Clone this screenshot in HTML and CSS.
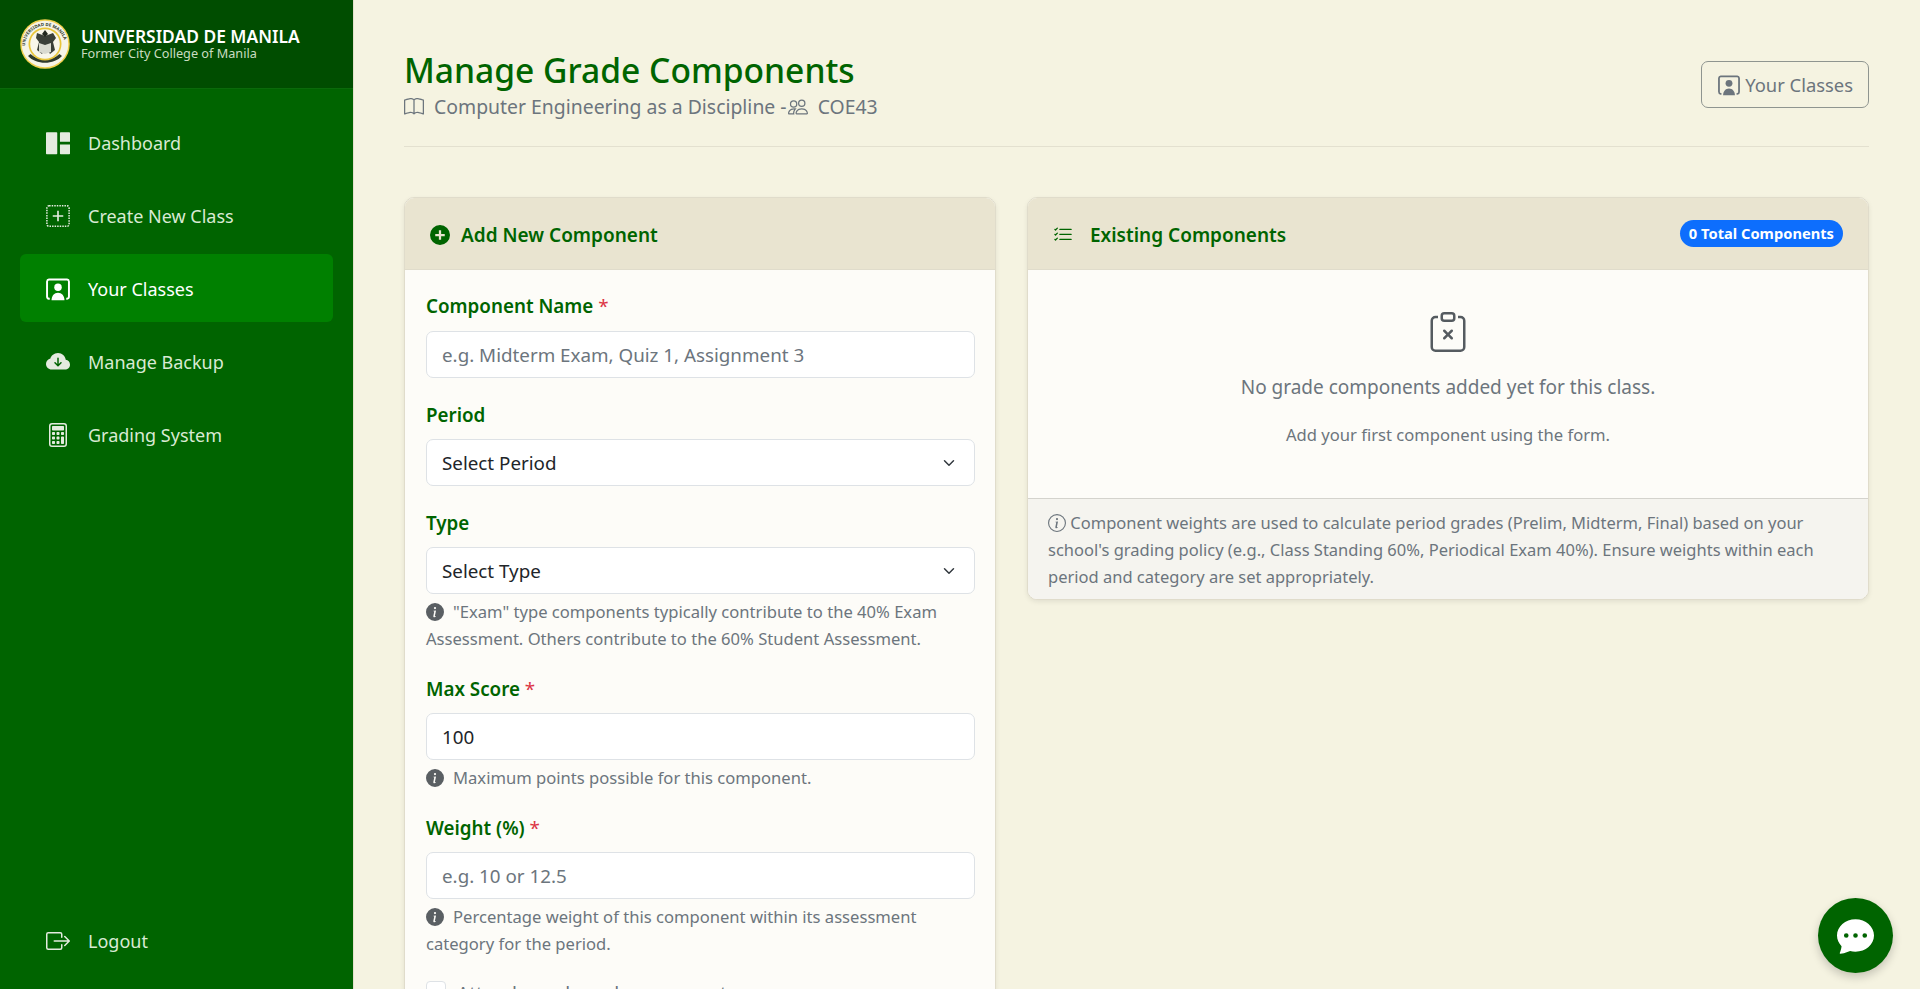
FILE: index.html

```html
<!DOCTYPE html>
<html lang="en">
  <head>
    <meta charset="UTF-8" />
    <meta name="viewport" content="width=device-width, initial-scale=1.0" />
    <title>Manage Grade Components</title>
    <link rel="stylesheet" href="styles.css">
  </head>
  <body>
    <aside class="sidebar">
      <div class="brand">
        <svg class="seal" viewBox="0 0 50 50">
          <circle cx="25" cy="25" r="24.800" fill="#f0cf4e"/>
          <circle cx="25" cy="25" r="23.300" fill="#f6f4e8"/>
          <path d="M8 37c8 9 26 9 34 0l-2.500-2c-7 7-22 7-29 0z" fill="#2f3a2c"/>
          <circle cx="25" cy="25" r="16.500" fill="#e8c53a"/>
          <circle cx="25" cy="25" r="14.800" fill="#f8f6ea"/>
          <path d="M17 14l8 3 8-3 3 5-3 4 2 8-5 4-3-5-2 0-3 5-5-4 2-8-3-4z" fill="#3a3f38"/>
          <path d="M19 24l6 2 6-2v9l-6 2-6-2z" fill="#d9dad0"/>
          <path d="M25 11l3 4-3 3-3-3z" fill="#22281f"/>
          <path id="seal-arc" d="M5 27a20 20 0 0 1 40 0" fill="none"/>
          <text class="seal-text"><textPath href="#seal-arc">UNIVERSIDAD DE MANILA</textPath></text>
        </svg>
        <div>
          <div class="brand-name">UNIVERSIDAD DE MANILA</div>
          <div class="brand-sub">Former City College of Manila</div>
        </div>
      </div>
      <nav class="nav">
        <a class="nav-item">
          <svg class="nav-icon" viewBox="0 0 16 16" fill="currentColor"><path d="M0 1.300a.5.5 0 0 1 .5-.5h6.500a.5.5 0 0 1 .5.5V15a.5.5 0 0 1-.5.5H.5A.5.5 0 0 1 0 15zM9.300 1.300a.5.5 0 0 1 .5-.5h5.700a.5.5 0 0 1 .5.5v5.900H9.300zM9.300 9H16v6a.5.5 0 0 1-.5.5H9.800a.5.5 0 0 1-.5-.5z"/></svg>
          Dashboard
        </a>
        <a class="nav-item">
          <svg class="nav-icon" viewBox="0 0 16 16" fill="none" stroke="currentColor"><rect x=".6" y="1.100" width="14.800" height="13.800" rx="1.500" stroke-dasharray="1 .7"/><path d="M8 4.500v7M4.500 8h7" stroke-width="1.100"/></svg>
          Create New Class
        </a>
        <a class="nav-item active">
          <svg class="nav-icon"><use href="#i-person-video"/></svg>
          Your Classes
        </a>
        <a class="nav-item">
          <svg class="nav-icon" viewBox="0 0 16 16" fill="currentColor"><path d="M8 2a5.530 5.530 0 0 0-3.594 1.342c-.766.66-1.321 1.520-1.464 2.383C1.266 6.095 0 7.555 0 9.318 0 11.366 1.708 13 3.781 13h8.906C14.502 13 16 11.570 16 9.773c0-1.636-1.242-2.969-2.834-3.194C12.923 3.999 10.690 2 8 2zm2.354 6.854-2 2a.5.5 0 0 1-.708 0l-2-2a.5.5 0 1 1 .708-.708L7.500 9.293V5.500a.5.5 0 0 1 1 0v3.793l1.146-1.147a.5.5 0 0 1 .708.708z"/></svg>
          Manage Backup
        </a>
        <a class="nav-item">
          <svg class="nav-icon" viewBox="0 0 16 16" fill="currentColor"><path d="M12 1a1 1 0 0 1 1 1v12a1 1 0 0 1-1 1H4a1 1 0 0 1-1-1V2a1 1 0 0 1 1-1h8zM4 0a2 2 0 0 0-2 2v12a2 2 0 0 0 2 2h8a2 2 0 0 0 2-2V2a2 2 0 0 0-2-2H4z"/><path d="M4 2.500a.5.5 0 0 1 .5-.5h7a.5.5 0 0 1 .5.5v2a.5.5 0 0 1-.5.5h-7a.5.5 0 0 1-.5-.5v-2zm0 4a.5.5 0 0 1 .5-.5h1a.5.5 0 0 1 .5.5v1a.5.5 0 0 1-.5.5h-1a.5.5 0 0 1-.5-.5v-1zm0 3a.5.5 0 0 1 .5-.5h1a.5.5 0 0 1 .5.5v1a.5.5 0 0 1-.5.5h-1a.5.5 0 0 1-.5-.5v-1zm0 3a.5.5 0 0 1 .5-.5h1a.5.5 0 0 1 .5.5v1a.5.5 0 0 1-.5.5h-1a.5.5 0 0 1-.5-.5v-1zm3-6a.5.5 0 0 1 .5-.5h1a.5.5 0 0 1 .5.5v1a.5.5 0 0 1-.5.5h-1a.5.5 0 0 1-.5-.5v-1zm0 3a.5.5 0 0 1 .5-.5h1a.5.5 0 0 1 .5.5v1a.5.5 0 0 1-.5.5h-1a.5.5 0 0 1-.5-.5v-1zm0 3a.5.5 0 0 1 .5-.5h1a.5.5 0 0 1 .5.5v1a.5.5 0 0 1-.5.5h-1a.5.5 0 0 1-.5-.5v-1zm3-6a.5.5 0 0 1 .5-.5h1a.5.5 0 0 1 .5.5v1a.5.5 0 0 1-.5.5h-1a.5.5 0 0 1-.5-.5v-1zm0 3a.5.5 0 0 1 .5-.5h1a.5.5 0 0 1 .5.5v4a.5.5 0 0 1-.5.5h-1a.5.5 0 0 1-.5-.5v-4z"/></svg>
          Grading System
        </a>
      </nav>
      <a class="nav-item logout">
        <svg class="nav-icon" viewBox="0 0 16 16" fill="currentColor"><path d="M10 12.500a.5.5 0 0 1-.5.5h-8a.5.5 0 0 1-.5-.5v-9a.5.5 0 0 1 .5-.5h8a.5.5 0 0 1 .5.5v2a.5.5 0 0 0 1 0v-2A1.500 1.500 0 0 0 9.500 2h-8A1.500 1.500 0 0 0 0 3.500v9A1.500 1.500 0 0 0 1.500 14h8a1.500 1.500 0 0 0 1.500-1.500v-2a.5.5 0 0 0-1 0v2z"/><path d="M15.854 8.354a.5.5 0 0 0 0-.708l-3-3a.5.5 0 0 0-.708.708L14.293 7.500H5.500a.5.5 0 0 0 0 1h8.793l-2.147 2.146a.5.5 0 0 0 .708.708l3-3z"/></svg>
        Logout
      </a>
    </aside>

    <main class="main">
      <header class="page-head">
        <div>
          <h1 class="page-title">Manage Grade Components</h1>
          <p class="page-sub">
            <svg class="sub-icon" viewBox="0 0 16 16" fill="currentColor"><path d="M1 2.828c.885-.37 2.154-.769 3.388-.893 1.330-.134 2.458.063 3.112.752v9.746c-.935-.53-2.120-.603-3.213-.493-1.180.12-2.370.461-3.287.811V2.828zm7.500-.141c.654-.689 1.782-.886 3.112-.752 1.234.124 2.503.523 3.388.893v9.923c-.918-.35-2.107-.692-3.287-.81-1.094-.111-2.278-.039-3.213.492V2.687zM8 1.783C7.015.936 5.587.81 4.287.94c-1.514.153-3.042.672-3.994 1.105A.5.5 0 0 0 0 2.500v11a.5.5 0 0 0 .707.455c.882-.4 2.303-.881 3.680-1.020 1.409-.142 2.590.087 3.223.877a.5.5 0 0 0 .78 0c.633-.79 1.814-1.019 3.222-.877 1.378.139 2.800.62 3.681 1.020A.5.5 0 0 0 16 13.500v-11a.5.5 0 0 0-.293-.455c-.952-.433-2.480-.952-3.994-1.105C10.413.809 8.985.936 8 1.783z"/></svg>
            Computer Engineering as a Discipline -
            <svg class="sub-icon people-icon" viewBox="0 0 16 16" fill="currentColor"><path d="M15 14s1 0 1-1-1-4-5-4-5 3-5 4 1 1 1 1h8zm-7.978-1A.261.261 0 0 1 7 12.996c.001-.264.167-1.030.76-1.720C8.312 10.629 9.282 10 11 10c1.717 0 2.687.63 3.240 1.276.593.69.758 1.457.76 1.720l-.008.002a.274.274 0 0 1-.014.002H7.022zM11 7a2 2 0 1 0 0-4 2 2 0 0 0 0 4zm3-2a3 3 0 1 1-6 0 3 3 0 0 1 6 0zM6.936 9.280a5.880 5.880 0 0 0-1.230-.247A7.350 7.350 0 0 0 5 9c-4 0-5 3-5 4 0 .667.333 1 1 1h4.216A2.238 2.238 0 0 1 5 13c0-1.010.377-2.042 1.090-2.904.243-.294.526-.569.846-.816zM4.920 10A5.493 5.493 0 0 0 4 13H1c0-.26.164-1.030.76-1.724.545-.636 1.492-1.256 3.160-1.275zM1.500 5.500a3 3 0 1 1 6 0 3 3 0 0 1-6 0zm3-2a2 2 0 1 0 0 4 2 2 0 0 0 0-4z"/></svg>
            COE43
          </p>
        </div>
        <a class="btn-back">
          <svg class="btn-icon"><use href="#i-person-video"/></svg>
          Your Classes
        </a>
      </header>

      <div class="columns">
        <section class="card card-form">
          <div class="card-head">
            <h2 class="card-title">
              <svg class="title-icon" viewBox="0 0 16 16" fill="currentColor"><path fill-rule="evenodd" d="M8 0a8 8 0 1 1 0 16A8 8 0 0 1 8 0zm-.9 4.200v2.900H4.200v1.800h2.900v2.900h1.800V8.900h2.900V7.100H8.900V4.200z"/></svg>
              Add New Component
            </h2>
          </div>
          <form class="card-body">
            <div class="field">
              <label class="field-label">Component Name <span class="req">*</span></label>
              <input class="control" type="text" placeholder="e.g. Midterm Exam, Quiz 1, Assignment 3">
            </div>
            <div class="field">
              <label class="field-label">Period</label>
              <select class="control"><option>Select Period</option></select>
            </div>
            <div class="field">
              <label class="field-label">Type</label>
              <select class="control"><option>Select Type</option></select>
              <p class="help"><svg class="help-icon"><use href="#i-info-fill"/></svg>"Exam" type components typically contribute to the 40% Exam Assessment. Others contribute to the 60% Student Assessment.</p>
            </div>
            <div class="field">
              <label class="field-label">Max Score <span class="req">*</span></label>
              <input class="control" type="text" value="100">
              <p class="help"><svg class="help-icon"><use href="#i-info-fill"/></svg>Maximum points possible for this component.</p>
            </div>
            <div class="field">
              <label class="field-label">Weight (%) <span class="req">*</span></label>
              <input class="control" type="text" placeholder="e.g. 10 or 12.5">
              <p class="help"><svg class="help-icon"><use href="#i-info-fill"/></svg>Percentage weight of this component within its assessment category for the period.</p>
            </div>
            <label class="check-row"><input class="check" type="checkbox"> Attendance-based component</label>
          </form>
        </section>

        <section class="card card-list">
          <div class="card-head head-between">
            <h2 class="card-title">
              <svg class="list-icon" viewBox="0 0 16 16" fill="currentColor"><path fill-rule="evenodd" d="M5 11.500a.5.5 0 0 1 .5-.5h9a.5.5 0 0 1 0 1h-9a.5.5 0 0 1-.5-.5zm0-4a.5.5 0 0 1 .5-.5h9a.5.5 0 0 1 0 1h-9a.5.5 0 0 1-.5-.5zm0-4a.5.5 0 0 1 .5-.5h9a.5.5 0 0 1 0 1h-9a.5.5 0 0 1-.5-.5zM3.854 2.146a.5.5 0 0 1 0 .708l-1.500 1.500a.5.5 0 0 1-.708 0l-.5-.5a.5.5 0 1 1 .708-.708L2 3.293l1.146-1.147a.5.5 0 0 1 .708 0zm0 4a.5.5 0 0 1 0 .708l-1.500 1.500a.5.5 0 0 1-.708 0l-.5-.5a.5.5 0 1 1 .708-.708L2 7.293l1.146-1.147a.5.5 0 0 1 .708 0zm0 4a.5.5 0 0 1 0 .708l-1.500 1.500a.5.5 0 0 1-.708 0l-.5-.5a.5.5 0 0 1 .708-.708l.146.147 1.146-1.147a.5.5 0 0 1 .708 0z"/></svg>
              Existing Components
            </h2>
            <span class="badge">0 Total Components</span>
          </div>
          <div class="empty">
            <svg class="empty-icon" viewBox="0 0 16 16" fill="currentColor"><path d="M6.146 7.146a.5.5 0 0 1 .708 0L8 8.293l1.146-1.147a.5.5 0 1 1 .708.708L8.707 9l1.147 1.146a.5.5 0 0 1-.708.708L8 9.707l-1.146 1.147a.5.5 0 0 1-.708-.708L7.293 9 6.146 7.854a.5.5 0 0 1 0-.708z"/><path d="M4 1.500H3a2 2 0 0 0-2 2V14a2 2 0 0 0 2 2h10a2 2 0 0 0 2-2V3.500a2 2 0 0 0-2-2h-1v1h1a1 1 0 0 1 1 1V14a1 1 0 0 1-1 1H3a1 1 0 0 1-1-1V3.500a1 1 0 0 1 1-1h1v-1z"/><path d="M9.500 1a.5.5 0 0 1 .5.5v1a.5.5 0 0 1-.5.5h-3a.5.5 0 0 1-.5-.5v-1a.5.5 0 0 1 .5-.5h3zm-3-1A1.500 1.500 0 0 0 5 1.500v1A1.500 1.500 0 0 0 6.500 4h3A1.500 1.500 0 0 0 11 2.500v-1A1.500 1.500 0 0 0 9.500 0h-3z"/></svg>
            <p class="empty-main">No grade components added yet for this class.</p>
            <p class="empty-sub">Add your first component using the form.</p>
          </div>
          <div class="card-foot">
            <svg class="foot-icon" viewBox="0 0 16 16" fill="currentColor"><path d="M8 15A7 7 0 1 1 8 1a7 7 0 0 1 0 14zm0 1A8 8 0 1 0 8 0a8 8 0 0 0 0 16z"/><path d="m8.930 6.588-2.290.287-.082.38.45.083c.294.07.352.176.288.469l-.738 3.468c-.194.897.105 1.319.808 1.319.545 0 1.178-.252 1.465-.598l.088-.416c-.2.176-.492.246-.686.246-.275 0-.375-.193-.304-.533L8.930 6.588zM9 4.500a1 1 0 1 1-2 0 1 1 0 0 1 2 0z"/></svg>
            Component weights are used to calculate period grades (Prelim, Midterm, Final) based on your school's grading policy (e.g., Class Standing 60%, Periodical Exam 40%). Ensure weights within each period and category are set appropriately.
          </div>
        </section>
      </div>
    </main>

    <button class="chat-btn">
      <svg class="chat-icon" viewBox="0 0 16 16" fill="currentColor"><path d="M16 8c0 3.866-3.582 7-8 7a9.060 9.060 0 0 1-2.347-.306c-.584.296-1.925.864-4.181 1.234-.2.032-.352-.176-.273-.362.354-.836.674-1.950.77-2.966C.744 11.370 0 9.760 0 8c0-3.866 3.582-7 8-7s8 3.134 8 7zM5 8a1 1 0 1 0-2 0 1 1 0 0 0 2 0zm4 0a1 1 0 1 0-2 0 1 1 0 0 0 2 0zm3 1a1 1 0 1 0 0-2 1 1 0 0 0 0 2z"/></svg>
    </button>

    <svg class="icon-defs">
      <symbol id="i-person-video" viewBox="0 0 16 16">
        <path d="M2.500 14.500H2A1.500 1.500 0 0 1 .7 13V3A1.500 1.500 0 0 1 2 1.700h12A1.500 1.500 0 0 1 15.300 3v10a1.500 1.500 0 0 1-1.300 1.500h-.5" fill="none" stroke="currentColor" stroke-width="1.300"/>
        <circle cx="8" cy="6.800" r="2.500" fill="currentColor"/>
        <path d="M3.700 15.500c0-3 1.800-5 4.300-5s4.300 2 4.300 5z" fill="currentColor"/>
      </symbol>
      <symbol id="i-info-fill" viewBox="0 0 16 16">
        <path fill="currentColor" d="M8 16A8 8 0 1 0 8 0a8 8 0 0 0 0 16zm.93-9.412-1 4.705c-.07.34.029.533.304.533.194 0 .487-.07.686-.246l-.088.416c-.287.346-.92.598-1.465.598-.703 0-1.002-.422-.808-1.319l.738-3.468c.064-.293.006-.399-.288-.469l-.451-.081.082-.381 2.290-.287zM8 5.500a1 1 0 1 1 0-2 1 1 0 0 1 0 2z"/>
      </symbol>
    </svg>
  </body>
</html>
```

FILE: styles.css

```css
* {
  box-sizing: border-box;
}
html,
body {
  height: 100%;
}
body {
  margin: 0;
  display: flex;
  overflow: hidden;
  background-color: #f5f3e1;
  color: #6c757d;
  font-family: "Noto Sans", "Open Sans", sans-serif;
  font-size: 17px;
  line-height: 27px;
}
.icon-defs {
  display: none;
}

/* sidebar */
.sidebar {
  width: 354px;
  flex-shrink: 0;
  height: 100%;
  display: flex;
  flex-direction: column;
  background-color: #006400;
  border-right: 1px solid #e3e0cc;
}
.brand {
  height: 89px;
  flex-shrink: 0;
  display: flex;
  align-items: center;
  gap: 11px;
  padding: 0 20px 2px;
  background-color: #004d00;
  border-bottom: 1px solid #0a6a0a;
}
.seal {
  width: 50px;
  height: 50px;
  flex-shrink: 0;
  margin-top: 2px;
}
.seal-text {
  fill: #2f3a2c;
  font-size: 4.400px;
  font-weight: 700;
}
.brand-name {
  color: #fff;
  font-size: 17.400px;
  font-weight: 600;
  line-height: 20px;
}
.brand-sub {
  color: #c9dcc0;
  font-size: 12.700px;
  line-height: 14px;
}
.nav {
  display: flex;
  flex-direction: column;
  gap: 5px;
  padding: 19px 20px 0;
}
.nav-item {
  height: 68px;
  display: flex;
  align-items: center;
  gap: 18px;
  padding: 2px 0 0 26px;
  color: #d9ead3;
  font-size: 18px;
  border-radius: 6px;
}
.nav-item.active {
  background-color: #008000;
  color: #fff;
}
.nav-icon {
  width: 24px;
  height: 24px;
  flex-shrink: 0;
  color: #e4ebdf;
}
.active .nav-icon {
  color: #fff;
}
.logout {
  margin: auto 20px 15px;
}

/* page */
.main {
  flex: 1;
  min-width: 0;
  height: 100%;
  overflow: hidden;
  padding: 46px 51px 0 50px;
}
.page-head {
  display: flex;
  justify-content: space-between;
  align-items: flex-start;
  height: 101px;
  border-bottom: 1px solid #e3e0cf;
}
.page-title {
  margin: 0;
  color: #006400;
  font-size: 33.600px;
  font-weight: 500;
  line-height: 48px;
}
.page-sub {
  margin: 0;
  font-size: 19.400px;
  line-height: 26px;
}
.sub-icon {
  width: 20px;
  height: 20px;
  vertical-align: -3px;
  margin-right: 5px;
}
.people-icon {
  margin-left: -4px;
}
.btn-back {
  margin-top: 15px;
  height: 47px;
  display: flex;
  align-items: center;
  gap: 5px;
  padding: 0 15px 0 16px;
  color: #6c757d;
  font-size: 18.400px;
  border: 1px solid #8f9590;
  border-radius: 7px;
}
.btn-icon {
  width: 22px;
  height: 22px;
}
.columns {
  display: flex;
  align-items: flex-start;
  gap: 31px;
  margin-top: 50px;
}
.card {
  background-color: #fdfcf8;
  border: 1px solid #e0dccb;
  border-radius: 10px;
  box-shadow: 0 2px 5px rgba(0, 0, 0, 0.08);
  overflow: hidden;
}
.card-form {
  width: 592px;
  flex-shrink: 0;
}
.card-list {
  flex: 1;
}
.card-head {
  height: 72px;
  display: flex;
  align-items: center;
  padding: 0 25px;
  background-color: #e9e4d0;
  border-bottom: 1px solid #e0dccb;
}
.head-between {
  justify-content: space-between;
}
.card-title {
  margin: 0;
  padding-top: 3px;
  display: flex;
  align-items: center;
  color: #006400;
  font-size: 19px;
  font-weight: 600;
}
.title-icon {
  width: 20px;
  height: 20px;
  margin-right: 11px;
}
.list-icon {
  width: 20px;
  height: 20px;
  margin-right: 17px;
}
.badge {
  height: 27px;
  display: flex;
  align-items: center;
  padding: 0 9px;
  background-color: #0d6efd;
  color: #fff;
  font-size: 14.700px;
  font-weight: 700;
  border-radius: 14px;
}

/* form */
.card-body {
  padding: 23px 20px 20px 21px;
}
.field {
  margin-bottom: 24px;
}
.field-label {
  display: block;
  margin-bottom: 10px;
  color: #006400;
  font-size: 18.800px;
  font-weight: 600;
}
.field:first-child .field-label {
  margin-bottom: 11px;
}
.req {
  color: #dc3545;
  font-weight: 400;
}
.control {
  display: block;
  width: 100%;
  height: 47px;
  padding: 1px 15px 0;
  background-color: #fff;
  border: 1px solid #dee2e6;
  border-radius: 7px;
  color: #212529;
  font-family: inherit;
  font-size: 18.800px;
}
.control::placeholder {
  color: #6c757d;
}
select.control {
  appearance: none;
  background-image: url("data:image/svg+xml,%3csvg xmlns='http://www.w3.org/2000/svg' viewBox='0 0 16 16'%3e%3cpath fill='none' stroke='%23343a40' stroke-linecap='round' stroke-linejoin='round' stroke-width='2' d='m2 5 6 6 6-6'/%3e%3c/svg%3e");
  background-repeat: no-repeat;
  background-position: right 17px center;
  background-size: 16px 12px;
}
.help {
  margin: 4px 0 0;
  font-size: 16.600px;
  line-height: 27px;
  color: #6c757d;
}
.help-icon {
  width: 18px;
  height: 18px;
  margin-right: 9px;
  vertical-align: -3px;
  color: #5a5f63;
}
.check-row {
  display: flex;
  align-items: flex-start;
  gap: 11px;
  margin-top: 3px;
  font-size: 19px;
}
.check {
  appearance: none;
  margin: 0;
  width: 20px;
  height: 20px;
  background-color: #fff;
  border: 1px solid #dee2e6;
  border-radius: 4px;
}

/* empty state */
.empty {
  height: 228px;
  display: flex;
  flex-direction: column;
  align-items: center;
  padding-top: 41px;
}
.empty-icon {
  width: 40px;
  height: 42px;
  color: #555b60;
}
.empty-main {
  margin: 21px 0 0;
  font-size: 19px;
}
.empty-sub {
  margin: 20px 0 0;
  font-size: 16.600px;
}
.card-foot {
  padding: 10px 20px 9px;
  background-color: #f5f4ef;
  border-top: 1px solid #d4d3cd;
  font-size: 16.500px;
  line-height: 27px;
}
.foot-icon {
  width: 18px;
  height: 18px;
  vertical-align: -3px;
}

.chat-btn {
  position: fixed;
  right: 27px;
  bottom: 16px;
  width: 75px;
  height: 75px;
  display: flex;
  align-items: center;
  justify-content: center;
  padding: 0;
  background-color: #006400;
  color: #fff;
  border: none;
  border-radius: 50%;
  box-shadow: 0 4px 10px rgba(0, 0, 0, 0.2);
}
.chat-icon {
  width: 37px;
  height: 37px;
}
```
